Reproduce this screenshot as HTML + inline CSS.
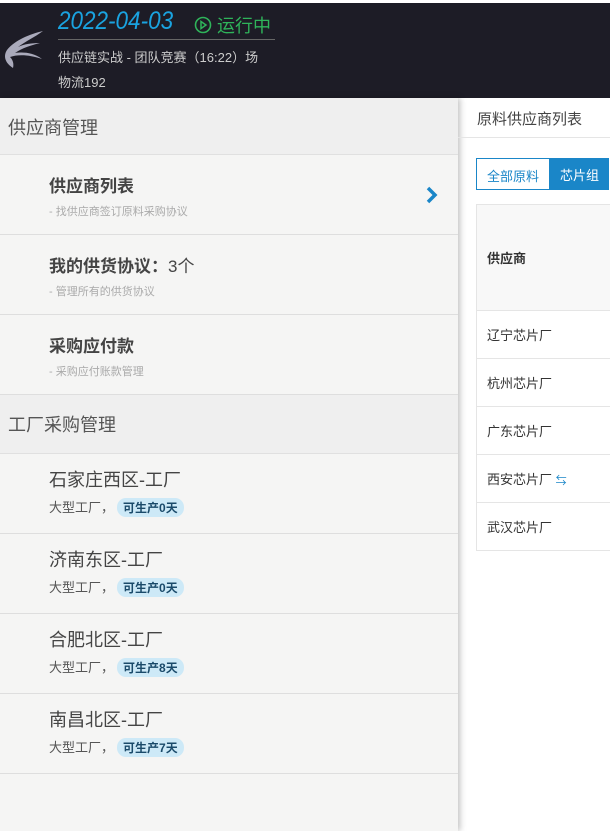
<!DOCTYPE html>
<html><head><meta charset="utf-8"><style>
*{margin:0;padding:0;box-sizing:border-box}
body{width:610px;height:831px;overflow:hidden;background:#fff;font-family:"Liberation Sans","Noto Sans CJK SC",sans-serif;position:relative}
.hdr{position:absolute;top:3px;left:0;width:610px;height:95px;background:#1d1c26}
.date{position:absolute;left:58px;top:4px;font-size:25px;color:#1aa3e0;font-style:italic;font-family:"Liberation Sans",sans-serif;transform:scaleX(0.9);transform-origin:left}
.run{position:absolute;left:194px;top:9px;color:#2fb35a;font-size:18px}
.line{position:absolute;left:58px;top:36px;width:217px;height:1px;background:#666}
.t1{position:absolute;left:58px;top:44px;color:#ccc;font-size:13px}
.t2{position:absolute;left:58px;top:69px;color:#ccc;font-size:13px}
.left{position:absolute;top:98px;left:0;width:458px;height:733px;background:#f5f5f4;box-shadow:2px 0 6px rgba(0,0,0,.25)}
.sec{height:57px;background:#efefef;border-bottom:1px solid #e0e0e0;font-size:18px;color:#555;padding:16px 0 0 8px}
.sec2{height:59px}
.it{height:80px;border-bottom:1px solid #dedede;padding:17px 0 0 49px;position:relative}
.it b{font-size:17px;color:#444;display:block}
.it small{font-size:11px;color:#aaa;display:block;margin-top:6px}
.f{height:80px;border-bottom:1px solid #dedede;padding:12px 0 0 49px}
.f .n{font-size:18px;color:#444}
.f .s{font-size:13px;color:#555;margin-top:5px}
.tag{display:inline-block;background:#cde9f7;color:#1a4a6a;font-weight:bold;font-size:12px;padding:1px 6px;border-radius:9px;margin-left:3px}
.right{position:absolute;left:458px;top:98px;width:152px}
.rt{height:40px;border-bottom:1px solid #e5e5e5;padding:10px 0 0 19px;font-size:15px;color:#444}
.tabs{position:absolute;left:18px;top:60px;height:32px;display:flex}
.tabs div{height:32px;padding:7px 10px;font-size:13px}
table{position:absolute;left:18px;top:106px;border-collapse:collapse;width:140px}
td{border:1px solid #e5e5e5;height:48px;padding-left:10px;font-size:13px;color:#333}
</style></head><body>
<div class="hdr">
<svg style="position:absolute;left:3px;top:26px" width="42" height="44" viewBox="0 0 42 44"><path d="M40 2C27 5 12 11 4 21c-4 6-2 13 6 18 1-4 0-8-3-11 9-3 20-2 32 2-9-7-20-7-27-6 7-5 17-8 25-10-8 0-16 1-22 4 8-6 17-10 25-16z" fill="#aab"/></svg>
<div class="date">2022-04-03</div>
<div class="run"><svg width="18" height="18" viewBox="0 0 18 18" style="vertical-align:-2px"><circle cx="9" cy="9" r="7.5" fill="none" stroke="#2fb35a" stroke-width="1.6"/><path d="M7 5.5l5 3.5-5 3.5z" fill="none" stroke="#2fb35a" stroke-width="1.5"/></svg> 运行中</div>
<div class="line"></div>
<div class="t1">供应链实战 - 团队竞赛（16:22）场</div>
<div class="t2">物流192</div>
</div>
<div class="left">
<div class="sec">供应商管理</div>
<div class="it"><b>供应商列表</b><small>- 找供应商签订原料采购协议</small>
<svg style="position:absolute;left:425px;top:31px" width="14" height="18" viewBox="0 0 14 18"><path d="M3 2l7 7-7 7" fill="none" stroke="#1a86c8" stroke-width="3.5"/></svg></div>
<div class="it"><b>我的供货协议：<span style="font-weight:normal">3个</span></b><small>- 管理所有的供货协议</small></div>
<div class="it"><b>采购应付款</b><small>- 采购应付账款管理</small></div>
<div class="sec sec2">工厂采购管理</div>
<div class="f"><div class="n">石家庄西区-工厂</div><div class="s">大型工厂，<span class="tag">可生产0天</span></div></div>
<div class="f"><div class="n">济南东区-工厂</div><div class="s">大型工厂，<span class="tag">可生产0天</span></div></div>
<div class="f"><div class="n">合肥北区-工厂</div><div class="s">大型工厂，<span class="tag">可生产8天</span></div></div>
<div class="f"><div class="n">南昌北区-工厂</div><div class="s">大型工厂，<span class="tag">可生产7天</span></div></div>
</div>
<div class="right">
<div class="rt">原料供应商列表</div>
<div class="tabs"><div style="border:1px solid #1a86c8;color:#1a86c8">全部原料</div><div style="background:#1a86c8;color:#fff">芯片组</div></div>
<table>
<tr><td style="height:106px;background:#f8f8f8;font-weight:bold">供应商</td></tr>
<tr><td>辽宁芯片厂</td></tr>
<tr><td>杭州芯片厂</td></tr>
<tr><td>广东芯片厂</td></tr>
<tr><td>西安芯片厂 <span style="color:#1a86c8;font-size:11px">⇆</span></td></tr>
<tr><td>武汉芯片厂</td></tr>
</table>
</div>
</body></html>
